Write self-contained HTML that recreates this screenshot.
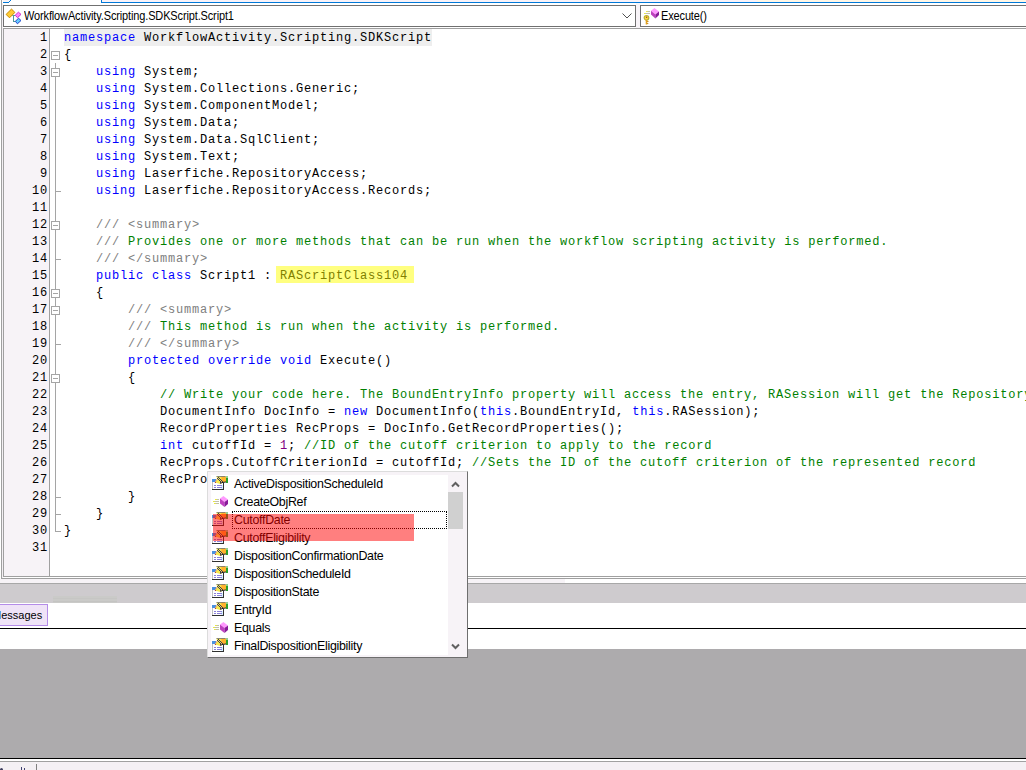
<!DOCTYPE html>
<html><head><meta charset="utf-8"><style>
*{margin:0;padding:0;box-sizing:border-box}
html,body{width:1026px;height:770px;overflow:hidden;background:#fff;position:relative;font-family:"Liberation Sans",sans-serif}
.abs{position:absolute}
.ln,.num{position:absolute;font-family:"Liberation Mono",monospace;font-size:12px;letter-spacing:0.8px;line-height:17px;height:17px;white-space:pre;color:#000}
.ln{left:64px;padding-top:1px}
.num{left:3px;width:45px;text-align:right;padding-top:1px}
.k{color:#0000ff}
.c{color:#008000}
.g{color:#808080}
.n{color:#800080}
.y{color:#808000}
.cbtext{position:absolute;font-size:11px;letter-spacing:-0.14px;transform:scaleY(1.12);transform-origin:0 0;line-height:14px;color:#000;white-space:pre}
.item{position:absolute;left:234px;height:18px;padding-top:2px;font-size:12.4px;letter-spacing:-0.28px;line-height:14px;white-space:pre;color:#000}
</style></head><body>
<div class="abs" style="left:0;top:0;width:101px;height:5px;background:#fff"></div>
<div class="abs" style="left:3px;top:0;width:7px;height:2px;background:#f8f4f8"></div>
<svg class="abs" style="left:0;top:0" width="14" height="6" shape-rendering="crispEdges"><path d="M3 2h6v1H3zM9 1h1v1H9zM10 0h1v1h-1z" fill="#0078d7"/></svg>
<div class="abs" style="left:101px;top:0;width:925px;height:3px;background:#f8f2f8;border-left:1px solid #0078d7;border-bottom:1px solid #0078d7"></div>
<div class="abs" style="left:757px;top:0;width:269px;height:2px;background:#fff6e6"></div>
<div class="abs" style="left:1px;top:0;width:1px;height:579px;background:#a0a0a0"></div>
<div class="abs" style="left:2px;top:3px;width:1px;height:575px;background:#f4f0f4"></div>
<div class="abs" style="left:3px;top:5px;width:633px;height:22px;border:1px solid #707070;background:#fff"></div>
<svg class="abs" style="left:4px;top:6px" width="20" height="20" viewBox="0 0 20 20">
<path d="M8.3 9.5H11.3M9.5 9.3V16M9 15.5H11.5" stroke="#4f9a9a" stroke-width="1" fill="none"/>
<path d="M7.5 3.1L10.9 6.4L5.5 11.8L2.1 8.4Z" fill="#ffcc33" stroke="#c98a00" stroke-width="1"/>
<path d="M14.4 6.2L17 8.4L13.5 11.7L11.2 9.2Z" fill="#ff88ff" stroke="#cc33cc" stroke-width="1"/>
<path d="M14.5 12.2L17 14.5L13.4 17.8L11.4 15.3Z" fill="#66ccff" stroke="#2244cc" stroke-width="1"/>
</svg>
<div class="cbtext" style="left:24px;top:8px">WorkflowActivity.Scripting.SDKScript.Script1</div>
<svg class="abs" style="left:620px;top:9px" width="14" height="12"><path d="M2.5 4.5L7 9L11.5 4.5" stroke="#505050" stroke-width="1" fill="none"/></svg>
<div class="abs" style="left:636px;top:3px;width:4px;height:25px;background:#f8f4f8"></div>
<div class="abs" style="left:640px;top:5px;width:390px;height:22px;border:1px solid #707070;background:#fff"></div>
<svg class="abs" style="left:641px;top:6px" width="20" height="20" viewBox="0 0 20 20">
<path d="M5 5.5H9M3 7.5H9" stroke="#c0c0b0" stroke-width="1"/>
<path d="M5 5.5H6.5M3 7.5H4.5" stroke="#f0f040" stroke-width="1"/>
<circle cx="5.5" cy="11.8" r="2.3" fill="#ffd840" stroke="#b8b030" stroke-width="1.2"/>
<circle cx="5.6" cy="11.3" r="0.8" fill="#a05020"/>
<path d="M5.5 14V18.5" stroke="#e0a020" stroke-width="1.6"/>
<path d="M6 15.5H7.5M6 17.5H7.3" stroke="#d09020" stroke-width="1"/>
<path d="M13.4 2L18 5.6L14.4 8.6L10 4.8Z" fill="#ff99ff"/>
<path d="M10 4.8L14.4 8.6L14.4 12.5L10 8.6Z" fill="#c040c0"/>
<path d="M14.4 8.6L18 5.6L18 9L14.4 12.5Z" fill="#8a1a9a"/>
</svg>
<div class="cbtext" style="left:661px;top:8px">Execute()</div>
<div class="abs" style="left:3px;top:28px;width:1030px;height:549px;border:1px solid #a0a0a0;background:#fff"></div>
<div class="abs" style="left:4px;top:29px;width:45px;height:547px;background:#f7f3f7"></div>
<div class="abs" style="left:49px;top:29px;width:1px;height:547px;background:#a0a0a0"></div>
<div class="abs" style="left:64px;top:29px;width:368px;height:17px;background:#eeeeee"></div>
<div class="abs" style="left:1px;top:578px;width:1025px;height:1px;background:#a0a0a0"></div>
<div class="abs" style="left:0;top:579px;width:565px;height:4px;background:#f7f3f7"></div>
<div class="abs" style="left:0;top:583px;width:1026px;height:1px;background:#a8a8a8"></div>
<div class="abs" style="left:0;top:584px;width:1026px;height:19px;background:#cecbce"></div>
<div class="abs" style="left:53px;top:596px;width:64px;height:7px;background:#cacac8"></div><div class="abs" style="left:53px;top:598px;width:64px;height:1px;background:#c6c6c4"></div><div class="abs" style="left:53px;top:601px;width:64px;height:1px;background:#c4c4c2"></div>
<div class="abs" style="left:-2px;top:604px;width:50px;height:22px;background:#efe3f7;border:1px solid #b48ce8"></div>
<div class="cbtext" style="left:-8px;top:608px;font-size:11px;letter-spacing:0;transform:none">Messages</div>
<div class="abs" style="left:0;top:628px;width:1026px;height:1px;background:#000"></div>
<div class="abs" style="left:0;top:649px;width:1026px;height:109px;background:#adabad"></div>
<div class="abs" style="left:0;top:758px;width:1026px;height:1px;background:#000"></div>
<div class="abs" style="left:0;top:761px;width:1026px;height:1px;background:#a0a0a0"></div>
<div class="abs" style="left:0;top:762px;width:1026px;height:8px;background:#f4f0f4"></div>
<div class="abs" style="left:36px;top:764px;width:1px;height:6px;background:#808080"></div>
<div class="abs" style="left:0;top:768px;width:3px;height:2px;background:#404060;border-radius:2px 2px 0 0"></div><div class="abs" style="left:21px;top:767px;width:1px;height:3px;background:#404070"></div><div class="abs" style="left:24px;top:768px;width:1px;height:2px;background:#404070"></div>
<div class="abs" style="left:276px;top:266px;width:138px;height:17px;background:#ffff80"></div>
<svg class="abs" style="left:0;top:0" width="80" height="560" shape-rendering="crispEdges"><path d="M55.5 63V531.5H61" stroke="#a5a5a5" fill="none"/><path d="M55 191.5H61" stroke="#a5a5a5"/><path d="M55 259.5H61" stroke="#a5a5a5"/><path d="M55 344.5H61" stroke="#a5a5a5"/><path d="M55 497.5H61" stroke="#a5a5a5"/><path d="M55 514.5H61" stroke="#a5a5a5"/><rect x="51.5" y="51.5" width="8" height="8" fill="#fff" stroke="#a5a5a5"/><path d="M53 55.5H58" stroke="#a5a5a5"/><rect x="51.5" y="68.5" width="8" height="8" fill="#fff" stroke="#a5a5a5"/><path d="M53 72.5H58" stroke="#a5a5a5"/><rect x="51.5" y="221.5" width="8" height="8" fill="#fff" stroke="#a5a5a5"/><path d="M53 225.5H58" stroke="#a5a5a5"/><rect x="51.5" y="289.5" width="8" height="8" fill="#fff" stroke="#a5a5a5"/><path d="M53 293.5H58" stroke="#a5a5a5"/><rect x="51.5" y="306.5" width="8" height="8" fill="#fff" stroke="#a5a5a5"/><path d="M53 310.5H58" stroke="#a5a5a5"/><rect x="51.5" y="374.5" width="8" height="8" fill="#fff" stroke="#a5a5a5"/><path d="M53 378.5H58" stroke="#a5a5a5"/></svg>
<div class="num" style="top:29px">1</div>
<div class="num" style="top:46px">2</div>
<div class="num" style="top:63px">3</div>
<div class="num" style="top:80px">4</div>
<div class="num" style="top:97px">5</div>
<div class="num" style="top:114px">6</div>
<div class="num" style="top:131px">7</div>
<div class="num" style="top:148px">8</div>
<div class="num" style="top:165px">9</div>
<div class="num" style="top:182px">10</div>
<div class="num" style="top:199px">11</div>
<div class="num" style="top:216px">12</div>
<div class="num" style="top:233px">13</div>
<div class="num" style="top:250px">14</div>
<div class="num" style="top:267px">15</div>
<div class="num" style="top:284px">16</div>
<div class="num" style="top:301px">17</div>
<div class="num" style="top:318px">18</div>
<div class="num" style="top:335px">19</div>
<div class="num" style="top:352px">20</div>
<div class="num" style="top:369px">21</div>
<div class="num" style="top:386px">22</div>
<div class="num" style="top:403px">23</div>
<div class="num" style="top:420px">24</div>
<div class="num" style="top:437px">25</div>
<div class="num" style="top:454px">26</div>
<div class="num" style="top:471px">27</div>
<div class="num" style="top:488px">28</div>
<div class="num" style="top:505px">29</div>
<div class="num" style="top:522px">30</div>
<div class="num" style="top:539px">31</div>

<div class="ln" style="top:29px"><span class="k">namespace</span> WorkflowActivity.Scripting.SDKScript</div>
<div class="ln" style="top:46px">{</div>
<div class="ln" style="top:63px">    <span class="k">using</span> System;</div>
<div class="ln" style="top:80px">    <span class="k">using</span> System.Collections.Generic;</div>
<div class="ln" style="top:97px">    <span class="k">using</span> System.ComponentModel;</div>
<div class="ln" style="top:114px">    <span class="k">using</span> System.Data;</div>
<div class="ln" style="top:131px">    <span class="k">using</span> System.Data.SqlClient;</div>
<div class="ln" style="top:148px">    <span class="k">using</span> System.Text;</div>
<div class="ln" style="top:165px">    <span class="k">using</span> Laserfiche.RepositoryAccess;</div>
<div class="ln" style="top:182px">    <span class="k">using</span> Laserfiche.RepositoryAccess.Records;</div>
<div class="ln" style="top:199px"></div>
<div class="ln" style="top:216px">    <span class="g">/// &lt;summary&gt;</span></div>
<div class="ln" style="top:233px">    <span class="g">///</span><span class="c"> Provides one or more methods that can be run when the workflow scripting activity is performed.</span></div>
<div class="ln" style="top:250px">    <span class="g">/// &lt;/summary&gt;</span></div>
<div class="ln" style="top:267px">    <span class="k">public</span> <span class="k">class</span> Script1 : <span class="y">RAScriptClass104</span></div>
<div class="ln" style="top:284px">    {</div>
<div class="ln" style="top:301px">        <span class="g">/// &lt;summary&gt;</span></div>
<div class="ln" style="top:318px">        <span class="g">///</span><span class="c"> This method is run when the activity is performed.</span></div>
<div class="ln" style="top:335px">        <span class="g">/// &lt;/summary&gt;</span></div>
<div class="ln" style="top:352px">        <span class="k">protected</span> <span class="k">override</span> <span class="k">void</span> Execute()</div>
<div class="ln" style="top:369px">        {</div>
<div class="ln" style="top:386px">            <span class="c">// Write your code here. The BoundEntryInfo property will access the entry, RASession will get the Repository session</span></div>
<div class="ln" style="top:403px">            DocumentInfo DocInfo = <span class="k">new</span> DocumentInfo(<span class="k">this</span>.BoundEntryId, <span class="k">this</span>.RASession);</div>
<div class="ln" style="top:420px">            RecordProperties RecProps = DocInfo.GetRecordProperties();</div>
<div class="ln" style="top:437px">            <span class="k">int</span> cutoffId = <span class="n">1</span>; <span class="c">//ID of the cutoff criterion to apply to the record</span></div>
<div class="ln" style="top:454px">            RecProps.CutoffCriterionId = cutoffId; <span class="c">//Sets the ID of the cutoff criterion of the represented record</span></div>
<div class="ln" style="top:471px">            RecProps.</div>
<div class="ln" style="top:488px">        }</div>
<div class="ln" style="top:505px">    }</div>
<div class="ln" style="top:522px">}</div>
<div class="ln" style="top:539px"></div>

<div class="abs" style="left:207px;top:471px;width:261px;height:187px;background:#f7f3f7;border-left:1px solid #dcdcdc;border-top:1px solid #dcdcdc;border-right:1px solid #6e6e6e;border-bottom:1px solid #6e6e6e"></div>
<div class="abs" style="left:211px;top:475px;width:237px;height:180px;background:#fff"></div>
<svg class="abs" style="left:211px;top:475px" width="20" height="18" viewBox="0 0 20 18" shape-rendering="crispEdges">
<rect x="1" y="4" width="12" height="11" fill="#fff"/>
<rect x="1" y="4" width="1" height="10" fill="#c0c0c0"/>
<rect x="1" y="14" width="12" height="1" fill="#303030"/>
<rect x="12" y="8" width="1" height="7" fill="#303030"/>
<rect x="1" y="4" width="4" height="3" fill="#4a90e0"/>
<rect x="10" y="10" width="2" height="4" fill="#d8f0ff"/>
<path d="M3 10h2v1H3zM6 10h5v1H6zM3 12h2v1H3zM6 12h5v1H6z" fill="#8a80d8"/>
</svg><svg class="abs" style="left:211px;top:475px" width="20" height="18" viewBox="0 0 20 18">
<path d="M5.5 1.2H14.5L15.2 6.8L11 7.6L9.4 8.9L4 7.6L6 4Z" fill="#f4e84a"/>
<path d="M10.5 1.5H15L15.2 6.5L11 7.5L10 6Z" fill="#ffb22e"/>
<path d="M5.5 1.5H14.5" stroke="#707070" stroke-width="0.8"/>
<path d="M9.4 8.6L11 7.6L15.2 6.9" stroke="#202020" stroke-width="1" fill="none"/>
<path d="M4 7.4L6.5 3.5" stroke="#e0a080" stroke-width="1"/>
<rect x="4" y="7" width="1" height="1" fill="#b04040"/>
</svg><svg class="abs" style="left:211px;top:475px" width="20" height="18" viewBox="0 0 20 18" shape-rendering="crispEdges">
<path d="M7 2h1v1H7zM6 3h1v1H6zM8 3h1v1H8zM7 4h1v1H7zM9 4h1v1H9zM8 5h1v1H8zM10 5h1v1h-1zM9 6h1v1H9zM11 6h1v1h-1zM9 7h1v1H9z" fill="#3a3a5a"/>
<rect x="15" y="1" width="2" height="7" fill="#2aa02a"/>
<rect x="15" y="1" width="2" height="2" fill="#90d090"/>
</svg><svg class="abs" style="left:211px;top:493px" width="20" height="18" viewBox="0 0 20 18">
<path d="M4 6.5H8M2 8.5H8M3 10.5H8" stroke="#c0c0a8" stroke-width="1"/>
<path d="M4 6.5H5.5M2 8.5H3.5M3 10.5H4.5" stroke="#f0f030" stroke-width="1"/>
<path d="M12.4 3L17 6.5L13.5 9L9 5.5Z" fill="#ff99ff"/>
<path d="M9 5.5L13.5 9L13.5 14L9 10.5Z" fill="#c040c0"/>
<path d="M13.5 9L17 6.5L17 11L13.5 14Z" fill="#8a1a9a"/>
</svg><svg class="abs" style="left:211px;top:511px" width="20" height="18" viewBox="0 0 20 18" shape-rendering="crispEdges">
<rect x="1" y="4" width="12" height="11" fill="#fff"/>
<rect x="1" y="4" width="1" height="10" fill="#c0c0c0"/>
<rect x="1" y="14" width="12" height="1" fill="#303030"/>
<rect x="12" y="8" width="1" height="7" fill="#303030"/>
<rect x="1" y="4" width="4" height="3" fill="#4a90e0"/>
<rect x="10" y="10" width="2" height="4" fill="#d8f0ff"/>
<path d="M3 10h2v1H3zM6 10h5v1H6zM3 12h2v1H3zM6 12h5v1H6z" fill="#8a80d8"/>
</svg><svg class="abs" style="left:211px;top:511px" width="20" height="18" viewBox="0 0 20 18">
<path d="M5.5 1.2H14.5L15.2 6.8L11 7.6L9.4 8.9L4 7.6L6 4Z" fill="#f4e84a"/>
<path d="M10.5 1.5H15L15.2 6.5L11 7.5L10 6Z" fill="#ffb22e"/>
<path d="M5.5 1.5H14.5" stroke="#707070" stroke-width="0.8"/>
<path d="M9.4 8.6L11 7.6L15.2 6.9" stroke="#202020" stroke-width="1" fill="none"/>
<path d="M4 7.4L6.5 3.5" stroke="#e0a080" stroke-width="1"/>
<rect x="4" y="7" width="1" height="1" fill="#b04040"/>
</svg><svg class="abs" style="left:211px;top:511px" width="20" height="18" viewBox="0 0 20 18" shape-rendering="crispEdges">
<path d="M7 2h1v1H7zM6 3h1v1H6zM8 3h1v1H8zM7 4h1v1H7zM9 4h1v1H9zM8 5h1v1H8zM10 5h1v1h-1zM9 6h1v1H9zM11 6h1v1h-1zM9 7h1v1H9z" fill="#3a3a5a"/>
<rect x="15" y="1" width="2" height="7" fill="#2aa02a"/>
<rect x="15" y="1" width="2" height="2" fill="#90d090"/>
</svg><svg class="abs" style="left:211px;top:529px" width="20" height="18" viewBox="0 0 20 18" shape-rendering="crispEdges">
<rect x="1" y="4" width="12" height="11" fill="#fff"/>
<rect x="1" y="4" width="1" height="10" fill="#c0c0c0"/>
<rect x="1" y="14" width="12" height="1" fill="#303030"/>
<rect x="12" y="8" width="1" height="7" fill="#303030"/>
<rect x="1" y="4" width="4" height="3" fill="#4a90e0"/>
<rect x="10" y="10" width="2" height="4" fill="#d8f0ff"/>
<path d="M3 10h2v1H3zM6 10h5v1H6zM3 12h2v1H3zM6 12h5v1H6z" fill="#8a80d8"/>
</svg><svg class="abs" style="left:211px;top:529px" width="20" height="18" viewBox="0 0 20 18">
<path d="M5.5 1.2H14.5L15.2 6.8L11 7.6L9.4 8.9L4 7.6L6 4Z" fill="#f4e84a"/>
<path d="M10.5 1.5H15L15.2 6.5L11 7.5L10 6Z" fill="#ffb22e"/>
<path d="M5.5 1.5H14.5" stroke="#707070" stroke-width="0.8"/>
<path d="M9.4 8.6L11 7.6L15.2 6.9" stroke="#202020" stroke-width="1" fill="none"/>
<path d="M4 7.4L6.5 3.5" stroke="#e0a080" stroke-width="1"/>
<rect x="4" y="7" width="1" height="1" fill="#b04040"/>
</svg><svg class="abs" style="left:211px;top:529px" width="20" height="18" viewBox="0 0 20 18" shape-rendering="crispEdges">
<path d="M7 2h1v1H7zM6 3h1v1H6zM8 3h1v1H8zM7 4h1v1H7zM9 4h1v1H9zM8 5h1v1H8zM10 5h1v1h-1zM9 6h1v1H9zM11 6h1v1h-1zM9 7h1v1H9z" fill="#3a3a5a"/>
<rect x="15" y="1" width="2" height="7" fill="#2aa02a"/>
<rect x="15" y="1" width="2" height="2" fill="#90d090"/>
</svg><svg class="abs" style="left:211px;top:547px" width="20" height="18" viewBox="0 0 20 18" shape-rendering="crispEdges">
<rect x="1" y="4" width="12" height="11" fill="#fff"/>
<rect x="1" y="4" width="1" height="10" fill="#c0c0c0"/>
<rect x="1" y="14" width="12" height="1" fill="#303030"/>
<rect x="12" y="8" width="1" height="7" fill="#303030"/>
<rect x="1" y="4" width="4" height="3" fill="#4a90e0"/>
<rect x="10" y="10" width="2" height="4" fill="#d8f0ff"/>
<path d="M3 10h2v1H3zM6 10h5v1H6zM3 12h2v1H3zM6 12h5v1H6z" fill="#8a80d8"/>
</svg><svg class="abs" style="left:211px;top:547px" width="20" height="18" viewBox="0 0 20 18">
<path d="M5.5 1.2H14.5L15.2 6.8L11 7.6L9.4 8.9L4 7.6L6 4Z" fill="#f4e84a"/>
<path d="M10.5 1.5H15L15.2 6.5L11 7.5L10 6Z" fill="#ffb22e"/>
<path d="M5.5 1.5H14.5" stroke="#707070" stroke-width="0.8"/>
<path d="M9.4 8.6L11 7.6L15.2 6.9" stroke="#202020" stroke-width="1" fill="none"/>
<path d="M4 7.4L6.5 3.5" stroke="#e0a080" stroke-width="1"/>
<rect x="4" y="7" width="1" height="1" fill="#b04040"/>
</svg><svg class="abs" style="left:211px;top:547px" width="20" height="18" viewBox="0 0 20 18" shape-rendering="crispEdges">
<path d="M7 2h1v1H7zM6 3h1v1H6zM8 3h1v1H8zM7 4h1v1H7zM9 4h1v1H9zM8 5h1v1H8zM10 5h1v1h-1zM9 6h1v1H9zM11 6h1v1h-1zM9 7h1v1H9z" fill="#3a3a5a"/>
<rect x="15" y="1" width="2" height="7" fill="#2aa02a"/>
<rect x="15" y="1" width="2" height="2" fill="#90d090"/>
</svg><svg class="abs" style="left:211px;top:565px" width="20" height="18" viewBox="0 0 20 18" shape-rendering="crispEdges">
<rect x="1" y="4" width="12" height="11" fill="#fff"/>
<rect x="1" y="4" width="1" height="10" fill="#c0c0c0"/>
<rect x="1" y="14" width="12" height="1" fill="#303030"/>
<rect x="12" y="8" width="1" height="7" fill="#303030"/>
<rect x="1" y="4" width="4" height="3" fill="#4a90e0"/>
<rect x="10" y="10" width="2" height="4" fill="#d8f0ff"/>
<path d="M3 10h2v1H3zM6 10h5v1H6zM3 12h2v1H3zM6 12h5v1H6z" fill="#8a80d8"/>
</svg><svg class="abs" style="left:211px;top:565px" width="20" height="18" viewBox="0 0 20 18">
<path d="M5.5 1.2H14.5L15.2 6.8L11 7.6L9.4 8.9L4 7.6L6 4Z" fill="#f4e84a"/>
<path d="M10.5 1.5H15L15.2 6.5L11 7.5L10 6Z" fill="#ffb22e"/>
<path d="M5.5 1.5H14.5" stroke="#707070" stroke-width="0.8"/>
<path d="M9.4 8.6L11 7.6L15.2 6.9" stroke="#202020" stroke-width="1" fill="none"/>
<path d="M4 7.4L6.5 3.5" stroke="#e0a080" stroke-width="1"/>
<rect x="4" y="7" width="1" height="1" fill="#b04040"/>
</svg><svg class="abs" style="left:211px;top:565px" width="20" height="18" viewBox="0 0 20 18" shape-rendering="crispEdges">
<path d="M7 2h1v1H7zM6 3h1v1H6zM8 3h1v1H8zM7 4h1v1H7zM9 4h1v1H9zM8 5h1v1H8zM10 5h1v1h-1zM9 6h1v1H9zM11 6h1v1h-1zM9 7h1v1H9z" fill="#3a3a5a"/>
<rect x="15" y="1" width="2" height="7" fill="#2aa02a"/>
<rect x="15" y="1" width="2" height="2" fill="#90d090"/>
</svg><svg class="abs" style="left:211px;top:583px" width="20" height="18" viewBox="0 0 20 18" shape-rendering="crispEdges">
<rect x="1" y="4" width="12" height="11" fill="#fff"/>
<rect x="1" y="4" width="1" height="10" fill="#c0c0c0"/>
<rect x="1" y="14" width="12" height="1" fill="#303030"/>
<rect x="12" y="8" width="1" height="7" fill="#303030"/>
<rect x="1" y="4" width="4" height="3" fill="#4a90e0"/>
<rect x="10" y="10" width="2" height="4" fill="#d8f0ff"/>
<path d="M3 10h2v1H3zM6 10h5v1H6zM3 12h2v1H3zM6 12h5v1H6z" fill="#8a80d8"/>
</svg><svg class="abs" style="left:211px;top:583px" width="20" height="18" viewBox="0 0 20 18">
<path d="M5.5 1.2H14.5L15.2 6.8L11 7.6L9.4 8.9L4 7.6L6 4Z" fill="#f4e84a"/>
<path d="M10.5 1.5H15L15.2 6.5L11 7.5L10 6Z" fill="#ffb22e"/>
<path d="M5.5 1.5H14.5" stroke="#707070" stroke-width="0.8"/>
<path d="M9.4 8.6L11 7.6L15.2 6.9" stroke="#202020" stroke-width="1" fill="none"/>
<path d="M4 7.4L6.5 3.5" stroke="#e0a080" stroke-width="1"/>
<rect x="4" y="7" width="1" height="1" fill="#b04040"/>
</svg><svg class="abs" style="left:211px;top:583px" width="20" height="18" viewBox="0 0 20 18" shape-rendering="crispEdges">
<path d="M7 2h1v1H7zM6 3h1v1H6zM8 3h1v1H8zM7 4h1v1H7zM9 4h1v1H9zM8 5h1v1H8zM10 5h1v1h-1zM9 6h1v1H9zM11 6h1v1h-1zM9 7h1v1H9z" fill="#3a3a5a"/>
<rect x="15" y="1" width="2" height="7" fill="#2aa02a"/>
<rect x="15" y="1" width="2" height="2" fill="#90d090"/>
</svg><svg class="abs" style="left:211px;top:601px" width="20" height="18" viewBox="0 0 20 18" shape-rendering="crispEdges">
<rect x="1" y="4" width="12" height="11" fill="#fff"/>
<rect x="1" y="4" width="1" height="10" fill="#c0c0c0"/>
<rect x="1" y="14" width="12" height="1" fill="#303030"/>
<rect x="12" y="8" width="1" height="7" fill="#303030"/>
<rect x="1" y="4" width="4" height="3" fill="#4a90e0"/>
<rect x="10" y="10" width="2" height="4" fill="#d8f0ff"/>
<path d="M3 10h2v1H3zM6 10h5v1H6zM3 12h2v1H3zM6 12h5v1H6z" fill="#8a80d8"/>
</svg><svg class="abs" style="left:211px;top:601px" width="20" height="18" viewBox="0 0 20 18">
<path d="M5.5 1.2H14.5L15.2 6.8L11 7.6L9.4 8.9L4 7.6L6 4Z" fill="#f4e84a"/>
<path d="M10.5 1.5H15L15.2 6.5L11 7.5L10 6Z" fill="#ffb22e"/>
<path d="M5.5 1.5H14.5" stroke="#707070" stroke-width="0.8"/>
<path d="M9.4 8.6L11 7.6L15.2 6.9" stroke="#202020" stroke-width="1" fill="none"/>
<path d="M4 7.4L6.5 3.5" stroke="#e0a080" stroke-width="1"/>
<rect x="4" y="7" width="1" height="1" fill="#b04040"/>
</svg><svg class="abs" style="left:211px;top:601px" width="20" height="18" viewBox="0 0 20 18" shape-rendering="crispEdges">
<path d="M7 2h1v1H7zM6 3h1v1H6zM8 3h1v1H8zM7 4h1v1H7zM9 4h1v1H9zM8 5h1v1H8zM10 5h1v1h-1zM9 6h1v1H9zM11 6h1v1h-1zM9 7h1v1H9z" fill="#3a3a5a"/>
<rect x="15" y="1" width="2" height="7" fill="#2aa02a"/>
<rect x="15" y="1" width="2" height="2" fill="#90d090"/>
</svg><svg class="abs" style="left:211px;top:619px" width="20" height="18" viewBox="0 0 20 18">
<path d="M4 6.5H8M2 8.5H8M3 10.5H8" stroke="#c0c0a8" stroke-width="1"/>
<path d="M4 6.5H5.5M2 8.5H3.5M3 10.5H4.5" stroke="#f0f030" stroke-width="1"/>
<path d="M12.4 3L17 6.5L13.5 9L9 5.5Z" fill="#ff99ff"/>
<path d="M9 5.5L13.5 9L13.5 14L9 10.5Z" fill="#c040c0"/>
<path d="M13.5 9L17 6.5L17 11L13.5 14Z" fill="#8a1a9a"/>
</svg><svg class="abs" style="left:211px;top:637px" width="20" height="18" viewBox="0 0 20 18" shape-rendering="crispEdges">
<rect x="1" y="4" width="12" height="11" fill="#fff"/>
<rect x="1" y="4" width="1" height="10" fill="#c0c0c0"/>
<rect x="1" y="14" width="12" height="1" fill="#303030"/>
<rect x="12" y="8" width="1" height="7" fill="#303030"/>
<rect x="1" y="4" width="4" height="3" fill="#4a90e0"/>
<rect x="10" y="10" width="2" height="4" fill="#d8f0ff"/>
<path d="M3 10h2v1H3zM6 10h5v1H6zM3 12h2v1H3zM6 12h5v1H6z" fill="#8a80d8"/>
</svg><svg class="abs" style="left:211px;top:637px" width="20" height="18" viewBox="0 0 20 18">
<path d="M5.5 1.2H14.5L15.2 6.8L11 7.6L9.4 8.9L4 7.6L6 4Z" fill="#f4e84a"/>
<path d="M10.5 1.5H15L15.2 6.5L11 7.5L10 6Z" fill="#ffb22e"/>
<path d="M5.5 1.5H14.5" stroke="#707070" stroke-width="0.8"/>
<path d="M9.4 8.6L11 7.6L15.2 6.9" stroke="#202020" stroke-width="1" fill="none"/>
<path d="M4 7.4L6.5 3.5" stroke="#e0a080" stroke-width="1"/>
<rect x="4" y="7" width="1" height="1" fill="#b04040"/>
</svg><svg class="abs" style="left:211px;top:637px" width="20" height="18" viewBox="0 0 20 18" shape-rendering="crispEdges">
<path d="M7 2h1v1H7zM6 3h1v1H6zM8 3h1v1H8zM7 4h1v1H7zM9 4h1v1H9zM8 5h1v1H8zM10 5h1v1h-1zM9 6h1v1H9zM11 6h1v1h-1zM9 7h1v1H9z" fill="#3a3a5a"/>
<rect x="15" y="1" width="2" height="7" fill="#2aa02a"/>
<rect x="15" y="1" width="2" height="2" fill="#90d090"/>
</svg>
<div class="item" style="top:475px">ActiveDispositionScheduleId</div>
<div class="item" style="top:493px">CreateObjRef</div>
<div class="item" style="top:511px">CutoffDate</div>
<div class="item" style="top:529px">CutoffEligibility</div>
<div class="item" style="top:547px">DispositionConfirmationDate</div>
<div class="item" style="top:565px">DispositionScheduleId</div>
<div class="item" style="top:583px">DispositionState</div>
<div class="item" style="top:601px">EntryId</div>
<div class="item" style="top:619px">Equals</div>
<div class="item" style="top:637px">FinalDispositionEligibility</div>

<div class="abs" style="left:448px;top:492px;width:15px;height:37px;background:#d0d0d0"></div>
<svg class="abs" style="left:449px;top:478px" width="14" height="12"><path d="M3 8.5L6.5 5L10 8.5" stroke="#606060" stroke-width="2" fill="none"/></svg><svg class="abs" style="left:449px;top:640px" width="14" height="12"><path d="M3 4.5L6.5 8L10 4.5" stroke="#606060" stroke-width="2" fill="none"/></svg>
<div class="abs" style="left:232px;top:511px;width:215px;height:18px;border:1px dotted #000"></div>
<div class="abs" style="left:213px;top:514px;width:201px;height:27px;background:rgba(255,0,0,0.5)"></div>
</body></html>
